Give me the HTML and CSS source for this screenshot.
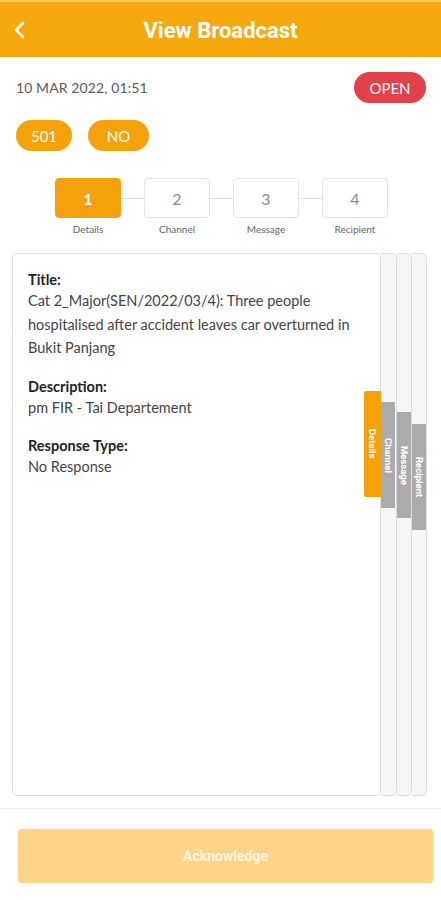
FILE: index.html
```html
<!DOCTYPE html>
<html>
<head>
<meta charset="utf-8">
<link rel="stylesheet" href="styles.css">
</head>
<body>
<header class="topbar">
  <svg class="back" width="14" height="18" viewBox="0 0 14 18"><polyline points="10,2 3,9 10,16" fill="none" stroke="#fff" stroke-width="2.6" stroke-linecap="round" stroke-linejoin="round"/></svg>
  <h1 class="title">View Broadcast</h1>
</header>

<div class="meta-row">
  <span class="date">10 MAR 2022, 01:51</span>
  <span class="status">OPEN</span>
</div>

<div class="pills">
  <span class="pill pill-num">501</span>
  <span class="pill pill-no">NO</span>
</div>

<div class="stepper">
  <div class="step active"><div class="step-box">1</div><div class="step-label">Details</div></div>
  <div class="connector"></div>
  <div class="step"><div class="step-box">2</div><div class="step-label">Channel</div></div>
  <div class="connector"></div>
  <div class="step"><div class="step-box">3</div><div class="step-label">Message</div></div>
  <div class="connector"></div>
  <div class="step"><div class="step-box">4</div><div class="step-label">Recipient</div></div>
</div>

<div class="deck">
  <div class="card">
    <div class="field">
      <div class="label">Title:</div>
      <div class="value">Cat 2_Major(SEN/2022/03/4): Three people hospitalised after accident leaves car overturned in Bukit Panjang</div>
    </div>
    <div class="field">
      <div class="label">Description:</div>
      <div class="value">pm FIR - Tai Departement</div>
    </div>
    <div class="field">
      <div class="label">Response Type:</div>
      <div class="value">No Response</div>
    </div>
    <div class="tab tab-active tab-details"><span>Details</span></div>
  </div>
  <div class="strip strip-1"><div class="tab"><span>Channel</span></div></div>
  <div class="strip strip-2"><div class="tab"><span>Message</span></div></div>
  <div class="strip strip-3"><div class="tab"><span>Recipient</span></div></div>
</div>

<footer class="actions">
  <button class="ack">Acknowledge</button>
</footer>
</body>
</html>
```

FILE: styles.css
```css
* { box-sizing: border-box; }
body {
  margin: 0;
  width: 441px;
  background: #fff;
  font-family: Lato, "Noto Sans", sans-serif;
  color: #333;
}
.topbar {
  position: relative;
  height: 57px;
  background: #f7a80d;
  border-top: 2px solid #fbc466;
  display: flex;
  align-items: center;
  justify-content: center;
}
.back {
  position: absolute;
  left: 13px;
  top: 19px;
}
.title {
  margin: 0;
  font-family: Roboto, "Liberation Sans", sans-serif;
  font-weight: 700;
  font-size: 22px;
  color: #fff;
  padding-top: 2px;
}
.meta-row {
  display: flex;
  justify-content: space-between;
  align-items: center;
  margin: 15px 15px 0 16px;
  height: 31px;
}
.date {
  font-size: 14px;
  color: #5a5a5a;
  letter-spacing: 0.1px;
}
.status {
  width: 72px;
  height: 31px;
  border-radius: 16px;
  background: #e2404a;
  color: #fff;
  font-size: 15px;
  display: flex;
  align-items: center;
  justify-content: center;
}
.pills {
  display: flex;
  gap: 16px;
  margin: 17px 0 0 16px;
}
.pill {
  height: 31px;
  border-radius: 16px;
  background: #f5a20a;
  color: #fff;
  font-size: 15px;
  display: flex;
  align-items: center;
  justify-content: center;
}
.pill-num { width: 56px; }
.pill-no { width: 61px; }
.stepper {
  display: flex;
  align-items: flex-start;
  margin: 27px 0 0 55px;
}
.step {
  width: 66px;
  display: flex;
  flex-direction: column;
  align-items: center;
}
.step-box {
  width: 66px;
  height: 40px;
  border: 1px solid #e4e4e4;
  border-radius: 4px;
  display: flex;
  align-items: center;
  justify-content: center;
  font-size: 16px;
  color: #8a8a8a;
}
.step.active .step-box {
  background: #f5a20a;
  border-color: #f5a20a;
  color: #fff;
  font-weight: 700;
}
.step-label {
  margin-top: 5px;
  font-size: 10px;
  line-height: 12px;
  color: #666;
}
.connector {
  width: 23px;
  height: 1px;
  background: #e0e0e0;
  margin-top: 20px;
}
.deck {
  display: flex;
  margin: 18px 0 0 12px;
  height: 543px;
}
.card {
  position: relative;
  width: 369px;
  height: 543px;
  border: 1px solid #dcdcdc;
  border-radius: 5px;
  padding: 16px 4px 0 15px;
  background: #fff;
}
.field { margin-bottom: 17px; }
.label {
  font-size: 14.5px;
  font-weight: 700;
  color: #222;
  line-height: 19px;
}
.value {
  font-size: 14.5px;
  color: #444;
  line-height: 23.5px;
}
.strip {
  width: 15px;
  height: 543px;
  border: 1px solid #dcdcdc;
  border-left: none;
  border-radius: 0 5px 5px 0;
  background: #f6f6f6;
  display: flex;
  flex-direction: column;
}
.strip-1 { width: 16px; padding-top: 148px; }
.strip-2 { padding-top: 158px; }
.strip-3 { padding-top: 170px; }
.tab {
  width: 14px;
  height: 106px;
  background: #ababab;
  display: flex;
  align-items: center;
  justify-content: center;
}
.tab span {
  writing-mode: vertical-rl;
  font-family: Roboto, "Liberation Sans", sans-serif;
  font-size: 9.5px;
  font-weight: 700;
  color: #fff;
}
.tab-details {
  position: absolute;
  right: -1px;
  top: 137px;
  width: 17px;
  background: #f5a20a;
  border-radius: 2px 0 0 2px;
}
.actions {
  margin-top: 12px;
  border-top: 1px solid #f0f0f0;
  padding: 20px 8px 0 18px;
}
.ack {
  width: 100%;
  height: 54px;
  border: none;
  border-radius: 3px;
  background: #fdd489;
  color: #fff6e4;
  font-family: Roboto, "Liberation Sans", sans-serif;
  font-size: 14px;
  font-weight: 700;
}
```
